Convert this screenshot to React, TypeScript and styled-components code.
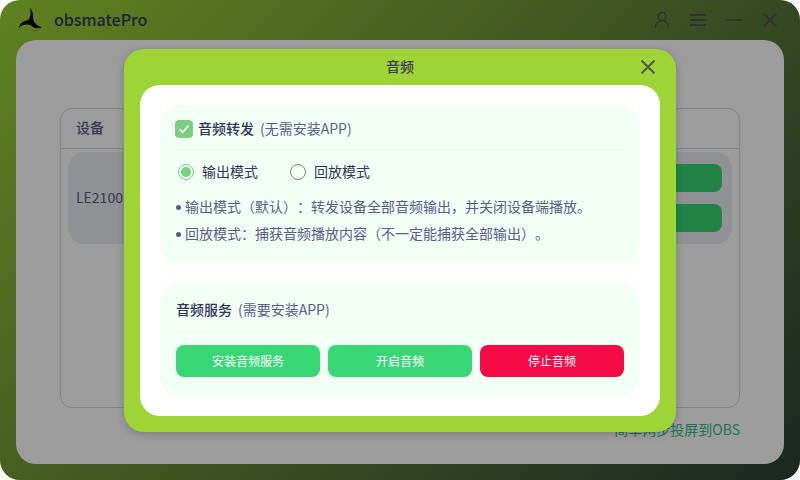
import React, { useState } from "react";
import styled, { createGlobalStyle } from "styled-components";

const GlobalStyle = createGlobalStyle`
  *, *::before, *::after { box-sizing: border-box; }
  html, body, #root { height: 100%; }
  body {
    margin: 0;
    background: #fff;
    color: #33355c;
    font-family: "Noto Sans CJK SC", "Noto Sans", sans-serif;
    font-size: 14px;
    line-height: 20px;
    text-spacing-trim: space-all;
  }
  button, input { font: inherit; margin: 0; }
`;

const Window = styled.div`
  position: relative;
  display: flex;
  flex-direction: column;
  height: 100%;
  padding: 0 16px 16px;
  border-radius: 20px;
  overflow: hidden;
  background: linear-gradient(135deg, #9ed436 0%, #2c4039 100%);
`;

const TitleBar = styled.header`
  display: flex;
  align-items: center;
  flex: none;
  height: 40px;
`;

const AppName = styled.h1`
  flex: 1;
  margin: 0 0 0 10px;
  padding-bottom: 2px;
  color: #33355c;
  font-size: 16px;
  font-weight: 500;
  line-height: 24px;
`;

const WindowControls = styled.div`
  display: flex;
  gap: 12px;
  margin-right: 2px;
`;

const IconButton = styled.button`
  display: grid;
  place-items: center;
  width: 24px;
  height: 24px;
  padding: 0;
  border: 0;
  background: none;
  color: #505050;
`;

const MainPanel = styled.main`
  display: flex;
  flex: 1;
  flex-direction: column;
  padding: 68px 44px 25px;
  border-radius: 20px;
  background: #fff;
`;

const DeviceList = styled.section`
  flex: 1;
  border: 1px solid #d8d8dc;
  border-radius: 12px;
`;

const ListHeading = styled.h2`
  height: 40px;
  margin: 0;
  padding: 0 15px;
  border-bottom: 1px solid #d8d8dc;
  color: #5b5d8a;
  font-size: 14px;
  font-weight: 500;
  line-height: 36px;
`;

const DeviceRow = styled.div`
  display: flex;
  align-items: center;
  justify-content: space-between;
  height: 92px;
  margin: 3px 7px;
  padding: 0 10px 0 8px;
  border-radius: 16px;
  background: #ecedf2;
  color: #5b5d8a;
`;

const DeviceActions = styled.div`
  display: flex;
  flex-direction: column;
  gap: 12px;
  width: 80px;
`;

const DeviceAction = styled.button`
  height: 28px;
  border: 0;
  border-radius: 8px;
  background: #38d675;
`;

const GuideLink = styled.a`
  align-self: flex-end;
  margin-top: 11px;
  color: #36bd8b;
  text-decoration: none;
`;

const Overlay = styled.div`
  position: absolute;
  inset: 0;
  display: flex;
  align-items: center;
  justify-content: center;
  padding-top: 1px;
  background: rgba(0, 0, 0, 0.39);
`;

const Dialog = styled.section`
  width: 69%;
  padding: 0 16px 16px;
  border-radius: 20px;
  background: #9ed436;
  box-shadow: 0 2px 8px rgba(0, 0, 0, 0.2);
`;

const DialogHeader = styled.header`
  display: grid;
  grid-template-columns: 24px 1fr 24px;
  align-items: center;
  height: 36px;
`;

const DialogTitle = styled.h2`
  grid-column: 2;
  margin: 0;
  padding-bottom: 2px;
  color: #3a3d4c;
  font-size: 14px;
  font-weight: 500;
  line-height: 20px;
  text-align: center;
`;

const DialogBody = styled.div`
  display: flex;
  flex-direction: column;
  gap: 20px;
  padding: 20px;
  border-radius: 20px;
  background: #fff;
`;

const Card = styled.section<{ $bottom: number }>`
  padding: 0 16px ${({ $bottom }) => $bottom}px;
  border-radius: 20px;
  background: #f1fff5;
`;

const CardHeading = styled.div<{ $height: number }>`
  display: flex;
  align-items: center;
  height: ${({ $height }) => $height}px;
  padding-top: 3px;
  border-bottom: 1px solid #efeff0;
  color: #5b5d8a;
`;

const Text = styled.span`
  padding-bottom: 2px;
`;

const Strong = styled(Text)`
  margin-right: 6px;
  color: #33355c;
  font-weight: 500;
`;

const CheckLabel = styled.label`
  display: flex;
  align-items: center;
  margin-left: -1px;
`;

const Checkbox = styled.input`
  appearance: none;
  width: 18px;
  height: 18px;
  border: 1px solid #7acf80;
  border-radius: 4px;
  background: transparent;
  &:checked { background: #7acf80; }
`;

const CheckBoxFrame = styled.span`
  position: relative;
  display: flex;
  margin-right: 5px;
`;

const CheckMark = styled.svg`
  position: absolute;
  inset: 0;
  pointer-events: none;
`;

const RadioGroup = styled.div`
  display: flex;
  gap: 32px;
  padding: 11px 2px;
`;

const RadioLabel = styled.label`
  display: flex;
  align-items: center;
  gap: 8px;
  color: #33355c;
`;

const Radio = styled.input`
  appearance: none;
  display: grid;
  place-items: center;
  width: 16px;
  height: 16px;
  border: 1px solid #808080;
  border-radius: 50%;
  background: transparent;
  &:checked { border-color: #7acf80; }
  &:checked::before {
    content: "";
    width: 10px;
    height: 10px;
    border-radius: 50%;
    background: #7acf80;
  }
`;

const Notes = styled.ul`
  margin: 0;
  padding: 0;
  color: #5b5d8a;
  line-height: 25px;
  list-style: none;
`;

const Note = styled.li`
  display: flex;
  align-items: center;
  gap: 4px;
  &::before {
    content: "";
    flex: none;
    width: 5px;
    height: 5px;
    border-radius: 50%;
    background: #555a8a;
  }
`;

const Actions = styled.div`
  display: grid;
  grid-template-columns: repeat(3, 1fr);
  gap: 8px;
  padding-top: 12px;
`;

const ActionButton = styled.button<{ $danger?: boolean }>`
  height: 32px;
  padding: 0;
  border: 0;
  border-radius: 8px;
  background: ${({ $danger }) => ($danger ? "#f50a48" : "#38d675")};
  color: #fff;
  font-size: 12px;
`;

const Logo = () => (
  <svg width="28" height="28" viewBox="0 0 28 28" aria-hidden="true">
    <path d="M2 25Q3 22.500 6 21.500Q4 23 2 25ZM14 24.500Q20 25.500 25 22.500Q21 26.500 14 24.500Z" fill="#000" opacity=".3" />
    <path
      d="M13.500 1.500C16.500 4.500 17.500 8 17 12.500C18 16.500 21 20.500 26 21C22.500 23.300 18 22.500 14.500 19C10.500 18 6 18.500 2.500 22C4 17.500 7.500 14.800 12 14C14.800 11.500 15.600 6.500 13.500 1.500Z"
      fill="#000"
    />
  </svg>
);

const CloseIcon = () => (
  <svg width="16" height="16" viewBox="0 0 16 16" fill="none" stroke="currentColor" strokeWidth="1.8" aria-hidden="true">
    <path d="M1.500 1.500 14.500 14.500M14.500 1.500 1.500 14.500" />
  </svg>
);

export default function App() {
  const [forward, setForward] = useState(true);
  const [mode, setMode] = useState("output");

  return (
    <>
      <GlobalStyle />
      <Window>
        <TitleBar>
          <Logo />
          <AppName>obsmatePro</AppName>
          <WindowControls>
            <IconButton aria-label="用户">
              <svg width="16" height="18" viewBox="0 0 16 18" fill="none" stroke="currentColor" strokeWidth="1.4">
                <circle cx="8" cy="5.500" r="4" />
                <path d="M1.500 16.500C1.500 12.500 4 9.800 8 9.800S14.500 12.500 14.500 16.500" />
              </svg>
            </IconButton>
            <IconButton aria-label="菜单">
              <svg width="16" height="14" viewBox="0 0 16 14" fill="currentColor">
                <path d="M0 1h16v2H0zM0 6h16v2H0zM0 11h16v2H0z" />
              </svg>
            </IconButton>
            <IconButton aria-label="最小化">
              <svg width="16" height="2" viewBox="0 0 16 2" fill="currentColor">
                <path d="M0 0h16v2H0z" />
              </svg>
            </IconButton>
            <IconButton aria-label="关闭窗口"><CloseIcon /></IconButton>
          </WindowControls>
        </TitleBar>

        <MainPanel>
          <DeviceList>
            <ListHeading>设备</ListHeading>
            <DeviceRow>
              <Text>LE2100</Text>
              <DeviceActions>
                <DeviceAction aria-label="投屏" />
                <DeviceAction aria-label="音频" />
              </DeviceActions>
            </DeviceRow>
          </DeviceList>
          <GuideLink href="#guide">简单两步投屏到OBS</GuideLink>
        </MainPanel>

        <Overlay>
          <Dialog role="dialog" aria-modal="true" aria-labelledby="audio-title">
            <DialogHeader>
              <DialogTitle id="audio-title">音频</DialogTitle>
              <IconButton aria-label="关闭"><CloseIcon /></IconButton>
            </DialogHeader>
            <DialogBody>
              <Card $bottom={16}>
                <CardHeading $height={45}>
                  <CheckLabel>
                    <CheckBoxFrame>
                      <Checkbox type="checkbox" checked={forward} onChange={(e) => setForward(e.target.checked)} />
                      {forward && (
                        <CheckMark width="18" height="18" viewBox="0 0 18 18" fill="none" stroke="#fff" strokeWidth="1.6">
                          <path d="M4.500 9.200 7.700 12.300 13.500 5.500" />
                        </CheckMark>
                      )}
                    </CheckBoxFrame>
                    <Strong>音频转发</Strong>
                    <Text>(无需安装APP)</Text>
                  </CheckLabel>
                </CardHeading>
                <RadioGroup role="radiogroup" aria-label="模式">
                  <RadioLabel>
                    <Radio type="radio" name="mode" checked={mode === "output"} onChange={() => setMode("output")} />
                    <Text>输出模式</Text>
                  </RadioLabel>
                  <RadioLabel>
                    <Radio type="radio" name="mode" checked={mode === "playback"} onChange={() => setMode("playback")} />
                    <Text>回放模式</Text>
                  </RadioLabel>
                </RadioGroup>
                <Notes>
                  <Note><Text>输出模式（默认）：转发设备全部音频输出，并关闭设备端播放。</Text></Note>
                  <Note><Text>回放模式：捕获音频播放内容（不一定能捕获全部输出）。</Text></Note>
                </Notes>
              </Card>
              <Card $bottom={19}>
                <CardHeading $height={49}>
                  <Strong>音频服务</Strong>
                  <Text>(需要安装APP)</Text>
                </CardHeading>
                <Actions>
                  <ActionButton>安装音频服务</ActionButton>
                  <ActionButton>开启音频</ActionButton>
                  <ActionButton $danger>停止音频</ActionButton>
                </Actions>
              </Card>
            </DialogBody>
          </Dialog>
        </Overlay>
      </Window>
    </>
  );
}
